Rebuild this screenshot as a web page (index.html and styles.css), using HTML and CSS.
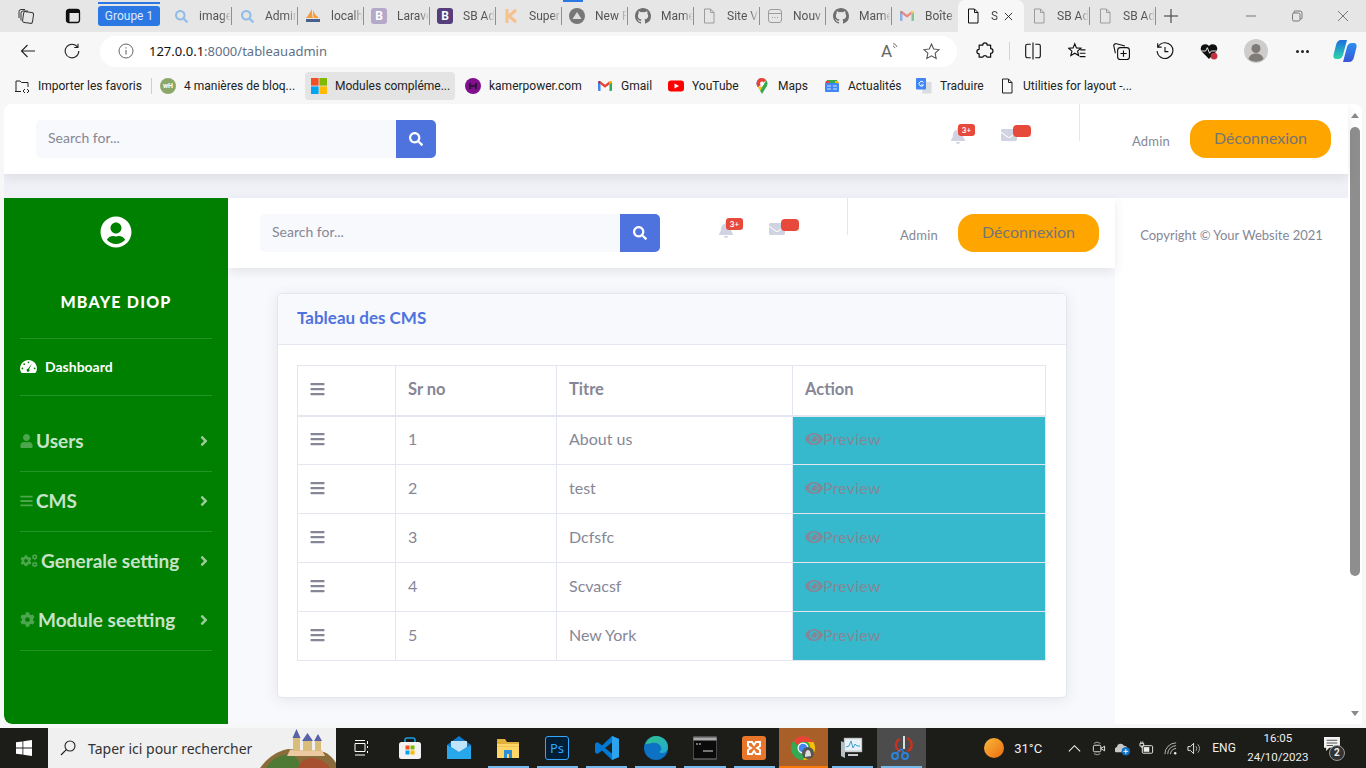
FILE: index.html
```html
<!DOCTYPE html>
<html lang="fr">
<head>
  <meta charset="UTF-8">
  <title>Tableau des CMS</title>
  <link rel="stylesheet" href="styles.css">
</head>
<body>

  <svg class="sprite" xmlns="http://www.w3.org/2000/svg">
    <symbol id="i-search" viewBox="0 0 512 512"><path fill="currentColor" d="M505 442.7L405.3 343c-4.5-4.5-10.6-7-17-7H372c27.6-35.3 44-79.7 44-128C416 93.1 322.9 0 208 0S0 93.1 0 208s93.1 208 208 208c48.3 0 92.7-16.4 128-44v16.3c0 6.4 2.5 12.5 7 17l99.7 99.7c9.4 9.4 24.6 9.4 33.9 0l28.3-28.3c9.4-9.4 9.4-24.6.1-34zM208 336c-70.7 0-128-57.2-128-128 0-70.7 57.2-128 128-128 70.7 0 128 57.2 128 128 0 70.7-57.2 128-128 128z"/></symbol>
    <symbol id="i-bell" viewBox="0 0 448 512"><path fill="currentColor" d="M224 512c35.32 0 63.97-28.65 63.97-64H160.03c0 35.35 28.65 64 63.97 64zm215.39-149.71c-19.32-20.76-55.47-51.99-55.47-154.29 0-77.7-54.48-139.9-127.94-155.16V32c0-17.67-14.32-32-31.98-32s-31.98 14.33-31.98 32v20.84C118.56 68.1 64.08 130.3 64.08 208c0 102.3-36.15 133.53-55.47 154.29-6 6.45-8.66 14.16-8.61 21.71.11 16.4 12.98 32 32.1 32h383.8c19.12 0 32-15.6 32.1-32 .05-7.55-2.61-15.27-8.61-21.71z"/></symbol>
    <symbol id="i-mail" viewBox="0 0 512 512"><path fill="currentColor" d="M502.3 190.8c3.9-3.1 9.7-.2 9.7 4.7V400c0 26.5-21.5 48-48 48H48c-26.5 0-48-21.5-48-48V195.6c0-5 5.7-7.8 9.7-4.7 22.4 17.4 52.1 39.5 154.1 113.6 21.1 15.4 56.7 47.8 92.2 47.6 35.7.3 72-32.8 92.3-47.6 102-74.1 131.6-96.3 154-113.7zM256 320c23.2.4 56.6-29.2 73.4-41.4 132.7-96.3 142.8-104.7 173.4-128.7 5.8-4.5 9.2-11.5 9.2-18.9v-19c0-26.5-21.5-48-48-48H48C21.5 64 0 85.5 0 112v19c0 7.4 3.4 14.3 9.2 18.9 30.6 23.9 40.7 32.4 173.4 128.7 16.8 12.2 50.2 41.8 73.4 41.4z"/></symbol>
    <symbol id="i-bars" viewBox="0 0 448 512"><path fill="currentColor" d="M16 132h416c8.837 0 16-7.163 16-16V76c0-8.837-7.163-16-16-16H16C7.163 60 0 67.163 0 76v40c0 8.837 7.163 16 16 16zm0 160h416c8.837 0 16-7.163 16-16v-40c0-8.837-7.163-16-16-16H16c-8.837 0-16 7.163-16 16v40c0 8.837 7.163 16 16 16zm0 160h416c8.837 0 16-7.163 16-16v-40c0-8.837-7.163-16-16-16H16c-8.837 0-16 7.163-16 16v40c0 8.837 7.163 16 16 16z"/></symbol>
    <symbol id="i-user" viewBox="0 0 448 512"><path fill="currentColor" d="M224 256c70.7 0 128-57.3 128-128S294.7 0 224 0 96 57.3 96 128s57.3 128 128 128zm89.6 32h-16.7c-22.2 10.2-46.9 16-72.9 16s-50.6-5.8-72.9-16h-16.7C60.2 288 0 348.2 0 422.4V464c0 26.5 21.5 48 48 48h352c26.5 0 48-21.5 48-48v-41.6c0-74.2-60.2-134.4-134.4-134.4z"/></symbol>
    <symbol id="i-eye" viewBox="0 0 576 512"><path fill="currentColor" d="M572.52 241.4C518.29 135.59 410.93 64 288 64S57.68 135.64 3.48 241.41a32.35 32.35 0 0 0 0 29.19C57.71 376.41 165.07 448 288 448s230.32-71.64 284.52-177.41a32.35 32.35 0 0 0 0-29.19zM288 400a144 144 0 1 1 144-144 143.93 143.93 0 0 1-144 144zm0-240a95.31 95.31 0 0 0-25.31 3.79 47.85 47.85 0 0 1-66.9 66.9A95.78 95.78 0 1 0 288 160z"/></symbol>
    <symbol id="i-usercircle" viewBox="0 0 496 512"><path fill="currentColor" d="M248 8C111 8 0 119 0 256s111 248 248 248 248-111 248-248S385 8 248 8zm0 96c48.6 0 88 39.4 88 88s-39.4 88-88 88-88-39.4-88-88 39.4-88 88-88zm0 344c-58.7 0-111.3-26.6-146.5-68.2 18.8-35.4 55.6-59.8 98.5-59.8 2.4 0 4.8.4 7.1 1.1 13 4.2 26.6 6.9 40.9 6.9 14.3 0 28-2.7 40.9-6.9 2.3-.7 4.7-1.1 7.1-1.1 42.9 0 79.7 24.4 98.5 59.8C359.3 421.4 306.7 448 248 448z"/></symbol>
    <symbol id="i-angle" viewBox="0 0 256 512"><path fill="currentColor" d="M224.3 273l-136 136c-9.4 9.4-24.6 9.4-33.9 0l-22.6-22.6c-9.4-9.4-9.4-24.6 0-33.9l96.4-96.4-96.4-96.4c-9.4-9.4-9.4-24.6 0-33.9L54.3 103c9.4-9.4 24.6-9.4 33.9 0l136 136c9.5 9.4 9.5 24.6.1 34z"/></symbol>
    <symbol id="i-cog" viewBox="0 0 512 512"><path fill="currentColor" d="M487.4 315.7l-42.6-24.6c4.3-23.2 4.3-47 0-70.2l42.6-24.6c4.9-2.8 7.1-8.6 5.5-14-11.1-35.6-30-67.8-54.7-94.6-3.8-4.1-10-5.1-14.8-2.3L380.8 110c-17.9-15.4-38.5-27.3-60.8-35.1V25.8c0-5.6-3.9-10.5-9.4-11.7-36.7-8.2-74.3-7.8-109.2 0-5.5 1.2-9.4 6.1-9.4 11.7V75c-22.2 7.9-42.8 19.8-60.8 35.1L88.7 85.5c-4.9-2.8-11-1.9-14.8 2.3-24.7 26.7-43.6 58.9-54.7 94.6-1.7 5.4.6 11.2 5.5 14L67.3 221c-4.3 23.2-4.3 47 0 70.2l-42.6 24.6c-4.9 2.8-7.1 8.6-5.5 14 11.1 35.6 30 67.8 54.7 94.6 3.8 4.1 10 5.1 14.8 2.3l42.6-24.6c17.9 15.4 38.5 27.3 60.8 35.1v49.2c0 5.6 3.9 10.5 9.4 11.7 36.7 8.2 74.3 7.8 109.2 0 5.5-1.2 9.4-6.1 9.4-11.7v-49.2c22.2-7.9 42.8-19.8 60.8-35.1l42.6 24.6c4.9 2.8 11 1.9 14.8-2.3 24.7-26.7 43.6-58.9 54.7-94.6 1.5-5.5-.7-11.3-5.6-14.1zM256 336c-44.1 0-80-35.9-80-80s35.9-80 80-80 80 35.9 80 80-35.9 80-80 80z"/></symbol>
    <symbol id="i-doc" viewBox="0 0 16 16"><path fill="none" stroke="currentColor" stroke-width="1" stroke-linejoin="round" d="M3.5 1h6l3.5 3.5V15h-9.5zM9.5 1v3.5H13"/></symbol>
    <symbol id="i-github" viewBox="0 0 16 16"><path fill="currentColor" fill-rule="evenodd" d="M8 0C3.58 0 0 3.58 0 8c0 3.54 2.29 6.53 5.47 7.59.4.07.55-.17.55-.38v-1.34c-2.23.49-2.69-1.07-2.69-1.07-.36-.92-.89-1.17-.89-1.17-.73-.5.05-.49.05-.49.8.06 1.23.83 1.23.83.72 1.22 1.87.87 2.33.66.07-.52.28-.87.51-1.07-1.78-.2-3.64-.89-3.64-3.95 0-.87.31-1.59.82-2.15-.08-.2-.36-1.02.08-2.12 0 0 .67-.21 2.2.82a7.6 7.6 0 0 1 4 0c1.53-1.04 2.2-.82 2.2-.82.44 1.1.16 1.92.08 2.12.51.56.82 1.27.82 2.15 0 3.07-1.87 3.75-3.65 3.95.29.25.54.73.54 1.48v2.2c0 .21.15.46.55.38A8 8 0 0 0 16 8c0-4.42-3.58-8-8-8z"/></symbol>
    <symbol id="i-gmail" viewBox="0 0 16 16"><path fill="#4285f4" d="M1 3.5h2.5V13H2a1 1 0 0 1-1-1z"/><path fill="#34a853" d="M12.5 3.5H15V12a1 1 0 0 1-1 1h-1.5z"/><path fill="#ea4335" d="M3.5 3.2L8 6.8l4.5-3.6v3.1L8 9.8 3.5 6.3z"/><path fill="#c5221f" d="M1 4.5C1 3 2.6 2.5 3.5 3.2v3.1L1 4.5z"/><path fill="#fbbc04" d="M15 4.5C15 3 13.4 2.5 12.5 3.2v3.1L15 4.5z"/></symbol>
    <symbol id="i-win" viewBox="0 0 16 16"><path fill="currentColor" d="M0 2.3l6.5-.9v6.2H0zM7.3 1.300L16 0v7.600H7.300zM0 8.400h6.500v6.200L0 13.700zM7.300 8.400H16V16l-8.700-1.300z"/></symbol>
    <symbol id="i-ms" viewBox="0 0 16 16"><path fill="#f25022" d="M0 0h7.600v7.600H0z"/><path fill="#7fba00" d="M8.400 0H16v7.600H8.400z"/><path fill="#00a4ef" d="M0 8.400h7.600V16H0z"/><path fill="#ffb900" d="M8.400 8.400H16V16H8.400z"/></symbol>
  </svg>

  <div class="browser">

    <div class="tabbar">
      <span class="tb-btn">
        <svg class="ico16" viewBox="0 0 16 16"><g fill="none" stroke="#333" stroke-width="1"><rect x="5" y="4" width="10" height="11" rx="2" transform="rotate(8 10 10)"/><path d="M3 12.5V5a2 2 0 0 1 2-2h5M1 10V3.5A2 2 0 0 1 3 1.5h4"/></g></svg>
      </span>
      <span class="tb-btn">
        <svg class="ico16" viewBox="0 0 16 16"><rect x="1.5" y="1.5" width="13" height="13" rx="2.5" fill="none" stroke="#111" stroke-width="1.3"/><path d="M1.5 2h13v3h-13zM1.5 5h3v9h-3z" fill="#111"/></svg>
      </span>
      <span class="tab-group">Groupe 1</span>
      <span class="tab-line"></span>
      <span class="tab-line second"></span>

      <div class="tab"><svg class="fav fav-blue"><use href="#i-search"/></svg><span class="tab-label">images</span></div>
      <div class="tab"><svg class="fav fav-blue"><use href="#i-search"/></svg><span class="tab-label">Admin</span></div>
      <div class="tab"><svg class="fav" viewBox="0 0 16 16"><path fill="#f39c3a" d="M1 10C3 8 5 4 7 1c0 4 0 7 1 9zM8 2c1 3 3 6 6 8H9C8 8 8 5 8 2z"/><path fill="#4a5f8a" d="M1 11h14v3H1z"/></svg><span class="tab-label">localhost</span></div>
      <div class="tab"><span class="fav fav-b fav-b-pale">B</span><span class="tab-label">Laravel</span></div>
      <div class="tab"><span class="fav fav-b">B</span><span class="tab-label">SB Admin</span></div>
      <div class="tab"><svg class="fav" viewBox="0 0 16 16"><path fill="none" stroke="#f6c08f" stroke-width="3" d="M4 1v14M13 2L6 8l7 6"/></svg><span class="tab-label">Super</span></div>
      <div class="tab"><svg class="fav" viewBox="0 0 16 16"><circle cx="8" cy="8" r="8" fill="#777"/><path d="M8 4l4.5 7h-9z" fill="#ddd"/></svg><span class="tab-label">New Pr</span></div>
      <div class="tab"><svg class="fav fav-gray"><use href="#i-github"/></svg><span class="tab-label">Mamer</span></div>
      <div class="tab"><svg class="fav fav-pale"><use href="#i-doc"/></svg><span class="tab-label">Site V</span></div>
      <div class="tab"><svg class="fav fav-pale" viewBox="0 0 16 16"><rect x="1.5" y="1.5" width="13" height="13" rx="2.5" fill="none" stroke="currentColor"/><path d="M1.5 5.5h13" stroke="currentColor"/><path d="M5 9.5h1M7.5 9.5h1M10 9.5h1" stroke="currentColor"/></svg><span class="tab-label">Nouv</span></div>
      <div class="tab"><svg class="fav fav-gray"><use href="#i-github"/></svg><span class="tab-label">Mamer</span></div>
      <div class="tab no-sep"><svg class="fav fav-faded"><use href="#i-gmail"/></svg><span class="tab-label">Boîte</span></div>
      <div class="tab active no-sep"><svg class="fav fav-dark"><use href="#i-doc"/></svg><span class="tab-label short">S</span>
        <svg class="tab-close" viewBox="0 0 10 10"><path d="M1 1l8 8M9 1l-8 8" stroke="#222" stroke-width="1"/></svg>
      </div>
      <div class="tab"><svg class="fav fav-pale"><use href="#i-doc"/></svg><span class="tab-label">SB Admin</span></div>
      <div class="tab"><svg class="fav fav-pale"><use href="#i-doc"/></svg><span class="tab-label">SB Admin</span></div>
      <svg class="tab-plus" viewBox="0 0 14 14"><path d="M7 0v14M0 7h14" stroke="#333" stroke-width="1"/></svg>

      <div class="win-ctrl">
        <svg viewBox="0 0 12 12"><path d="M1 6h10" stroke="#777"/></svg>
        <svg viewBox="0 0 12 12"><path d="M3 3V2a1 1 0 0 1 1-1h5a2 2 0 0 1 2 2v5a1 1 0 0 1-1 1H9" fill="none" stroke="#777"/><rect x="1.5" y="3" width="7.5" height="8" rx="1.5" fill="none" stroke="#777"/></svg>
        <svg viewBox="0 0 12 12"><path d="M1 1l10 10M11 1L1 11" stroke="#777"/></svg>
      </div>
    </div>

    <div class="addressbar">
      <svg class="nav-ico" viewBox="0 0 16 16"><path d="M15 8H1.5M7.5 2L1.5 8l6 6" fill="none" stroke="#222" stroke-width="1.1"/></svg>
      <svg class="nav-ico" viewBox="0 0 16 16"><path d="M13.5 4A6.8 6.8 0 1 0 14.8 8M14 .8V4.5h-3.7" fill="none" stroke="#222" stroke-width="1.1"/></svg>
      <div class="urlbox">
        <svg class="info" viewBox="0 0 16 16"><circle cx="8" cy="8" r="7" fill="none" stroke="#666"/><path d="M8 7v4.5M8 4.3v1.300" stroke="#666" stroke-width="1.1"/></svg>
        <span class="url"><b>127.0.0.1</b>:8000/tableauadmin</span>
        <span class="readaloud">A<svg viewBox="0 0 8 8"><path d="M1 1.5a5 5 0 0 1 4 3.5M1 4a3 3 0 0 1 2 2" fill="none" stroke="#555" stroke-width=".8"/></svg></span>
        <svg class="urlstar" viewBox="0 0 16 16"><path d="M8 1l2.1 4.6 5 .6-3.7 3.4 1 5L8 12.1 3.6 14.6l1-5L.9 6.2l5-.6z" fill="none" stroke="#555"/></svg>
      </div>
      <div class="toolset">
        <svg class="tool tool-ext" viewBox="0 0 16 16"><path d="M6 2.8a2 2 0 0 1 4 0h3v3a2.1 2.1 0 0 1 0 4.2v3.5H9.8a1.9 1.9 0 0 0-3.700 0H2.800v-3a2 2 0 0 1 0-4V2.800z" fill="none" stroke="#111" stroke-width="1.1" stroke-linejoin="round"/></svg>
        <span class="tool-sep"></span>
        <svg class="tool" viewBox="0 0 16 16"><path d="M6 2H3a1.5 1.5 0 0 0-1.5 1.5v9A1.5 1.5 0 0 0 3 14h3M10 2h3a1.5 1.5 0 0 1 1.5 1.5v9A1.5 1.5 0 0 1 13 14h-3M8 .5v15" fill="none" stroke="#111"/></svg>
        <svg class="tool" viewBox="0 0 16 16"><path d="M6 1.5l1.5 3.7 4 .3-3 2.6 1 3.9L6 10l-3.5 2 1-3.9-3-2.6 4-.3zM11 7h4.5M10.5 10H15.5M10.5 13H15.5" fill="none" stroke="#111"/></svg>
        <svg class="tool" viewBox="0 0 16 16"><rect x="5" y="5" width="10.5" height="10.5" rx="2.5" fill="none" stroke="#111"/><path d="M10.2 7.5v5.5M7.5 10.2h5.5M11.5 3.5l-7.5-2A2 2 0 0 0 1.5 3L3 10" fill="none" stroke="#111"/></svg>
        <svg class="tool" viewBox="0 0 16 16"><path d="M2 4a7 7 0 1 1-1 4M1.5 1v3.5H5M8 4.5V8.5H11" fill="none" stroke="#111"/></svg>
        <svg class="tool" viewBox="0 0 16 16"><path d="M8 15L1.5 8.5A4 4 0 0 1 8 3.500a4 4 0 0 1 6.500 5z" fill="#111"/><path d="M1 8h4l1.5-3 2 5 1.5-2h5" fill="none" stroke="#fff" stroke-width=".8"/><circle cx="12.5" cy="12.5" r="3" fill="#c4313d"/></svg>
        <span class="avatar"><svg viewBox="0 0 24 24"><circle cx="12" cy="12" r="12" fill="#cfcdcb"/><circle cx="12" cy="9.5" r="4.5" fill="#7e7b79"/><path d="M4.5 20c1-4 4-5.5 7.5-5.5s6.5 1.5 7.5 5.5c-4 3.5-11 3.5-15 0z" fill="#7e7b79"/></svg></span>
        <span class="dots"><i></i><i></i><i></i></span>
        <svg class="copilot" viewBox="0 0 24 24"><defs><linearGradient id="cp1" x1="0" y1="0" x2="0" y2="1"><stop offset="0" stop-color="#1b6fe0"/><stop offset="1" stop-color="#2fd6a8"/></linearGradient><linearGradient id="cp2" x1="0" y1="0" x2="0" y2="1"><stop offset="0" stop-color="#2a90ef"/><stop offset="1" stop-color="#3a55d8"/></linearGradient></defs><path d="M8 1h6l-4 15c-.5 2-2 4-5 4H3c-2 0-3-2-2.5-4L3 6c.5-3 2.5-5 5-5z" fill="url(#cp1)"/><path d="M16 23h-6l4-15c.5-2 2-4 5-4h2c2 0 3 2 2.5 4L21 18c-.5 3-2.5 5-5 5z" fill="url(#cp2)"/></svg>
      </div>
    </div>

    <div class="bookmarks">
      <span class="bm bm-import"><svg class="bm-ico" viewBox="0 0 16 16"><path d="M2 13V3h4l1.5 1.5H14V9M1 13.5h6M11 11l-2 2 2 2M13 11l2 2-2 2" fill="none" stroke="#222"/></svg>Importer les favoris</span>
      <span class="bm-sep"></span>
      <span class="bm bm-wh"><span class="wh-ico">wH</span>4 manières de bloq...</span>
      <span class="bm bm-on"><svg class="bm-ico"><use href="#i-ms"/></svg>Modules compléme...</span>
      <span class="bm bm-kamer"><svg class="bm-ico" viewBox="0 0 16 16"><circle cx="8" cy="8" r="8" fill="#7f0f8d"/><path d="M5 5v6M11 5v6M5 8h6" stroke="#35103b" stroke-width="2"/></svg>kamerpower.com</span>
      <span class="bm bm-gmail"><svg class="bm-ico"><use href="#i-gmail"/></svg>Gmail</span>
      <span class="bm bm-yt"><svg class="bm-ico" viewBox="0 0 16 16"><rect y="2.5" width="16" height="11" rx="3" fill="#f00"/><path d="M6.5 5.5L11 8l-4.5 2.5z" fill="#fff"/></svg>YouTube</span>
      <span class="bm bm-maps"><svg class="bm-ico" viewBox="0 0 16 16"><path d="M8 0a5.5 5.5 0 0 0-4 9.2z" fill="#4285f4"/><path d="M8 0a5.5 5.5 0 0 1 4.3 2.3L4 9.2A5.5 5.5 0 0 1 8 0z" fill="#ea4335"/><path d="M12.3 2.3a5.5 5.5 0 0 1 .4 6L8 16 6 12.5z" fill="#34a853"/><path d="M4 9.2L8 16l-2-3.5 3-4z" fill="#fbbc04"/><circle cx="8" cy="5.5" r="2" fill="#fff"/></svg>Maps</span>
      <span class="bm bm-news"><svg class="bm-ico" viewBox="0 0 16 16"><path d="M3 2h10l1 3H2z" fill="#34a853"/><path d="M2 3l3 0v2H1z" fill="#ea4335"/><path d="M11 3h3l1 2h-4z" fill="#fbbc04"/><rect x="1" y="5" width="14" height="9" rx="1" fill="#4285f4"/><path d="M3 8h4M3 11h4M9 8h4M9 11h4" stroke="#d2e3fc"/></svg>Actualités</span>
      <span class="bm bm-trad"><svg class="bm-ico" viewBox="0 0 16 16"><path d="M8 4h7.5v11.5H6z" fill="#dadce0"/><rect width="10" height="11.5" rx="1" fill="#4285f4"/><path d="M7.5 4.5A2.4 2.4 0 1 0 7.5 7H5" fill="none" stroke="#fff" stroke-width="1"/></svg>Traduire</span>
      <span class="bm bm-util"><svg class="bm-ico"><use href="#i-doc"/></svg>Utilities for layout -...</span>
    </div>

    <div class="viewport">
      <div class="page">

        <nav class="topbar">
          <form class="searchbox"><span class="searchinput">Search for...</span><span class="searchbtn"><svg><use href="#i-search"/></svg></span></form>
          <div class="top-right">
            <span class="alert-ico"><svg class="bell"><use href="#i-bell"/></svg><span class="badge">3+</span></span>
            <span class="alert-ico"><svg class="mail"><use href="#i-mail"/></svg><span class="badge empty"></span></span>
            <span class="top-divider"></span>
            <span class="admin-name">Admin</span>
            <button class="logout" type="button">Déconnexion</button>
          </div>
        </nav>

        <div class="band"></div>

        <div class="page-row">
          <aside class="sidebar">
            <svg class="side-avatar"><use href="#i-usercircle"/></svg>
            <div class="side-name">MBAYE DIOP</div>
            <hr class="side-line">
            <a class="side-dash">
              <svg viewBox="0 0 576 512"><path fill="#fff" d="M288 32C129 32 0 161 0 320c0 53 14 102 39 144 6 10 16 16 28 16h442c12 0 22-6 28-16 25-42 39-91 39-144C576 161 447 32 288 32z"/><g fill="#008000"><circle cx="288" cy="112" r="30"/><circle cx="140" cy="176" r="30"/><circle cx="80" cy="320" r="30"/><circle cx="496" cy="320" r="30"/><path d="M400 160l-90 190a50 50 0 1 1-40-14z"/></g></svg>
              Dashboard
            </a>
            <hr class="side-line">
            <a class="side-item first"><svg class="si-ico si-user"><use href="#i-user"/></svg><span>Users</span><svg class="si-arrow"><use href="#i-angle"/></svg></a>
            <hr class="side-line">
            <a class="side-item"><svg class="si-ico si-user"><use href="#i-bars"/></svg><span>CMS</span><svg class="si-arrow"><use href="#i-angle"/></svg></a>
            <hr class="side-line">
            <a class="side-item">
              <svg class="si-ico si-cogs" viewBox="0 0 640 512"><use href="#i-cog" x="0" y="40" width="420" height="420"/><use href="#i-cog" x="420" y="0" width="220" height="220"/><use href="#i-cog" x="420" y="270" width="220" height="220"/></svg>
              <span>Generale setting</span><svg class="si-arrow"><use href="#i-angle"/></svg>
            </a>
            <a class="side-item"><svg class="si-ico si-cog"><use href="#i-cog"/></svg><span>Module seetting</span><svg class="si-arrow"><use href="#i-angle"/></svg></a>
            <hr class="side-line">
          </aside>

          <main class="main">
            <nav class="topbar inner">
              <form class="searchbox"><span class="searchinput">Search for...</span><span class="searchbtn"><svg><use href="#i-search"/></svg></span></form>
              <div class="top-right">
                <span class="alert-ico"><svg class="bell"><use href="#i-bell"/></svg><span class="badge">3+</span></span>
                <span class="alert-ico"><svg class="mail"><use href="#i-mail"/></svg><span class="badge empty"></span></span>
                <span class="top-divider"></span>
                <span class="admin-name">Admin</span>
                <button class="logout" type="button">Déconnexion</button>
              </div>
            </nav>

            <div class="card">
              <div class="card-header">Tableau des CMS</div>
              <div class="card-body">
                <table class="cms-table">
                  <thead>
                    <tr>
                      <th><svg class="row-bars"><use href="#i-bars"/></svg></th>
                      <th>Sr no</th>
                      <th>Titre</th>
                      <th>Action</th>
                    </tr>
                  </thead>
                  <tbody>
                    <tr>
                      <td><svg class="row-bars"><use href="#i-bars"/></svg></td><td>1</td><td>About us</td>
                      <td class="td-action"><span class="preview"><svg><use href="#i-eye"/></svg>Preview</span></td>
                    </tr>
                    <tr>
                      <td><svg class="row-bars"><use href="#i-bars"/></svg></td><td>2</td><td>test</td>
                      <td class="td-action"><span class="preview"><svg><use href="#i-eye"/></svg>Preview</span></td>
                    </tr>
                    <tr>
                      <td><svg class="row-bars"><use href="#i-bars"/></svg></td><td>3</td><td>Dcfsfc</td>
                      <td class="td-action"><span class="preview"><svg><use href="#i-eye"/></svg>Preview</span></td>
                    </tr>
                    <tr>
                      <td><svg class="row-bars"><use href="#i-bars"/></svg></td><td>4</td><td>Scvacsf</td>
                      <td class="td-action"><span class="preview"><svg><use href="#i-eye"/></svg>Preview</span></td>
                    </tr>
                    <tr>
                      <td><svg class="row-bars"><use href="#i-bars"/></svg></td><td>5</td><td>New York</td>
                      <td class="td-action"><span class="preview"><svg><use href="#i-eye"/></svg>Preview</span></td>
                    </tr>
                  </tbody>
                </table>
              </div>
            </div>
          </main>

          <aside class="side-foot">Copyright © Your Website 2021</aside>
        </div>
      </div>

      <div class="scrollbar">
        <span class="sb-up"></span>
        <span class="sb-thumb"></span>
        <span class="sb-down"></span>
      </div>
    </div>

    <footer class="taskbar">
      <span class="start"><svg><use href="#i-win"/></svg></span>
      <div class="task-search">
        <svg viewBox="0 0 16 16"><circle cx="10" cy="6" r="5" fill="none" stroke="#222" stroke-width="1.1"/><path d="M6.3 9.7L1 15" stroke="#222" stroke-width="1.2"/></svg>
        <span>Taper ici pour rechercher</span>
        <svg class="castle" viewBox="0 0 76 40"><path d="M0 40C6 32 14 24 28 21l36 3c5 2 9 6 12 11v5z" fill="#8a6b3a"/><path d="M6 40c6-9 14-14 24-13 8 1 10 7 10 13z" fill="#4f7a36"/><path d="M38 40c2-7 10-12 20-9 6 2 10 5 12 9z" fill="#a6502f"/><path d="M30 22h32l3 6H27z" fill="#ecc9a0"/><path d="M33 9h7v14h-7zM43 12h9v11h-9zM55 12h6v11h-6z" fill="#d9bd7a"/><path d="M36.5 1l4 9h-8zM47.5 5l5.5 8H42zM58 6l4 7h-8z" fill="#5a62a8"/></svg>
      </div>
      <span class="task-ico"><svg class="taskview" viewBox="0 0 16 16"><path d="M2 .5h10M2 3.500h10v8H2zM2 15h10M14.500 1v3M14.500 6v2M14.500 11v2" fill="none" stroke="#fff"/></svg></span>
      <span class="task-ico"><svg viewBox="0 0 24 24"><path d="M7 6V3.500A2 2 0 0 1 9 2h6a2 2 0 0 1 2 1.500V6" fill="none" stroke="#19a0e0" stroke-width="1.6"/><rect x="1" y="6" width="22" height="17" rx="2.5" fill="#f3f3f3"/><path d="M7.500 9.500h4v4h-4z" fill="#f25022"/><path d="M12.500 9.500h4v4h-4z" fill="#7fba00"/><path d="M7.500 14.500h4v4h-4z" fill="#00a4ef"/><path d="M12.500 14.500h4v4h-4z" fill="#ffb900"/></svg></span>
      <span class="task-ico"><svg viewBox="0 0 24 24"><path d="M0 9l12-9 12 9v14H0z" fill="#0f78c8"/><path d="M0 9l12 7 12-7v14H0z" fill="#28a8ea"/><path d="M4 5h16v6l-8 5-8-5z" fill="#bfe4fb"/></svg></span>
      <span class="task-ico open"><svg viewBox="0 0 24 24"><path d="M1 3h8l2 3h12v16H1z" fill="#e2b13c"/><path d="M1 8h22v14H1z" fill="#ffd768"/><path d="M8 14h8v8h-3v-4h-2v4H8z" fill="#2d8fd6"/><rect x="1" y="10" width="22" height="1" fill="#f0c352"/></svg></span>
      <span class="task-ico open"><svg viewBox="0 0 24 24"><rect x=".5" y=".5" width="23" height="23" rx="2.5" fill="#001e36" stroke="#31a8ff"/><text x="12" y="17" text-anchor="middle" class="ps-letters">Ps</text></svg></span>
      <span class="task-ico open"><svg viewBox="0 0 24 24"><path d="M17 0l7 3v18l-7 3-10-9.5L2.5 18 0 16.5V7.5L2.5 6 7 9.500z" fill="#0078d4"/><path d="M17 6.500L10 12l7 5.500z" fill="#1f1f1b"/><path d="M17 0l7 3v18l-7 3z" fill="#2da3ec"/></svg></span>
      <span class="task-ico open"><svg viewBox="0 0 24 24"><defs><linearGradient id="ed1" x1="0" y1="0" x2="1" y2="1"><stop offset="0" stop-color="#33c481"/><stop offset="1" stop-color="#1fa9d8"/></linearGradient></defs><circle cx="12" cy="12" r="12" fill="#0d72c4"/><path d="M1 9C3 3 8 0 12 0c7 0 12 5 12 11 0 4-3 6-6 6-2 0-3-1-3-1 2-1 3-3 2-5-1-3-5-5-9-4-3 .5-6 1-7 2z" fill="url(#ed1)"/></svg></span>
      <span class="task-ico open"><svg viewBox="0 0 24 24"><rect y="1" width="24" height="22" rx="1" fill="#0b0b0b" stroke="#888"/><rect x=".5" y="1.5" width="23" height="3" fill="#aaa"/><path d="M3 8h2M6 8h2M10 15h10" stroke="#ddd"/></svg></span>
      <span class="task-ico open"><svg viewBox="0 0 24 24"><rect width="24" height="24" rx="3" fill="#e8752a"/><path d="M6 6h4l2 3 2-3h4v4l-3 2 3 2v4h-4l-2-3-2 3H6v-4l3-2-3-2z" fill="none" stroke="#fff" stroke-width="2"/></svg></span>
      <span class="task-ico open on-orange"><svg viewBox="0 0 24 24"><circle cx="12" cy="12" r="12" fill="#34a853"/><path d="M12 0a12 12 0 0 1 10.4 6H12a6 6 0 0 0-5.6 3.8L2.6 4.4A12 12 0 0 1 12 0z" fill="#ea4335"/><path d="M22.4 6A12 12 0 0 1 12 24l5-8.5a6 6 0 0 0-.5-9.5z" fill="#fbbc04"/><circle cx="12" cy="12" r="5.5" fill="#fff"/><circle cx="12" cy="12" r="4.3" fill="#4285f4"/><circle cx="17" cy="17" r="6" fill="#555"/><path d="M14 21c0-4 1-7 3-7s3 3 3 6z" fill="#ddd"/></svg></span>
      <span class="task-ico open"><svg viewBox="0 0 24 24"><path d="M4 2h18v14H4z" fill="#d6dde0" stroke="#999" stroke-width=".5"/><path d="M5 3.5h16V14H5z" fill="#eaf2f7"/><path d="M6 11l3-1 2-5 2 7 2-4 2 2h3" fill="none" stroke="#3b9fd1"/><path d="M1 5v15l4 2V7z" fill="#b8bfc2"/><path d="M8 18h10v2H8z" fill="#c9cfd2"/></svg></span>
      <span class="task-ico open on-gray"><svg viewBox="0 0 24 24"><path d="M14 0v13" stroke="#ddd" stroke-width="2"/><path d="M10 3C4 6 5 14 11 15M17 2c6 3 6 10 1 13" fill="none" stroke="#c8321e" stroke-width="2.5"/><circle cx="5" cy="20" r="3" fill="none" stroke="#2c82d6" stroke-width="2"/><circle cx="15" cy="20" r="3" fill="none" stroke="#2c82d6" stroke-width="2"/><path d="M6 18l5-5M14 18l-2-5" stroke="#2c82d6" stroke-width="1.5"/></svg></span>

      <div class="tray">
        <span class="sun"></span>
        <span class="temp">31°C</span>
        <svg class="tr-ico caret" viewBox="0 0 16 16"><path d="M2 11l6-6 6 6" fill="none" stroke="#eee" stroke-width="1.2"/></svg>
        <svg class="tr-ico meet" viewBox="0 0 16 16"><rect x="2.5" y="4.5" width="8" height="7" rx="1.5" fill="none" stroke="#eee"/><path d="M10.5 8l4-2.5v5z" fill="none" stroke="#eee"/><path d="M3 2.5a6 6 0 0 1 7 0M3 13.5a6 6 0 0 0 7 0" fill="none" stroke="#aaa"/></svg>
        <svg class="tr-ico cloud" viewBox="0 0 16 16"><path d="M1 12a3 3 0 0 1 1-5.5A4 4 0 0 1 9.5 5 3 3 0 0 1 13 8v4z" fill="#c8c8c8"/><circle cx="11.5" cy="11" r="4.5" fill="#1273c4"/><path d="M9 11h5M11.5 8.5v5" stroke="#fff"/></svg>
        <svg class="tr-ico batt" viewBox="0 0 16 16"><rect x="3.5" y="5" width="11" height="8" rx="1" fill="none" stroke="#eee"/><rect x="5" y="6.5" width="6" height="5" fill="#eee"/><path d="M1 2.5h4v3H1zM2 .5v2M4 .5v2M3 5.5v2" fill="none" stroke="#eee"/></svg>
        <svg class="tr-ico wifi" viewBox="0 0 16 16"><path d="M2 14A12 12 0 0 1 14 2M5 14a9 9 0 0 1 9-9M8 14a6 6 0 0 1 6-6" fill="none" stroke="#bbb" stroke-width="1"/><circle cx="13" cy="13" r="1.3" fill="#eee"/></svg>
        <svg class="tr-ico vol" viewBox="0 0 16 16"><path d="M1 6h2.5L7 2.5v11L3.5 10H1z" fill="none" stroke="#eee"/><path d="M9.5 5.5a4 4 0 0 1 0 5M11.5 3.5a7 7 0 0 1 0 9" fill="none" stroke="#aaa"/></svg>
        <span class="lang">ENG</span>
        <span class="clock"><span>16:05</span><span>24/10/2023</span></span>
        <span class="notif"><svg viewBox="0 0 16 16"><path d="M0 1h15v10H5l-3 3v-3H0z" fill="#f2f2f2"/><path d="M2.5 4h10M2.5 6.5h10M2.5 9h6" stroke="#555"/></svg><span class="notif-num">2</span></span>
      </div>
    </footer>
  </div>

</body>
</html>
```

FILE: styles.css
```css
* {
  box-sizing: border-box;
}

html, body {
  margin: 0;
  padding: 0;
  height: 100%;
  overflow: hidden;
}

body {
  font-family: Roboto, Arial, sans-serif;
  color: #333;
  background: #f7f7f7;
}

.sprite {
  display: none;
}

.browser {
  display: flex;
  flex-direction: column;
  width: 1366px;
  height: 768px;
}

/* tab strip */
.tabbar {
  position: relative;
  display: flex;
  align-items: center;
  height: 32px;
  background: #e6e6e6;
  font-size: 12px;
  color: #555;
}

.tb-btn {
  display: flex;
  justify-content: center;
  width: 42px;
  margin-left: 5px;
}

.ico16 {
  width: 16px;
  height: 16px;
}

.tab-group {
  display: flex;
  align-items: center;
  justify-content: center;
  width: 62px;
  height: 20px;
  margin-left: 4px;
  margin-right: 6px;
  border-radius: 3px;
  background: #2b78e4;
  color: #dfe9fb;
  font-size: 12px;
}

.tab-line {
  position: absolute;
  top: 2px;
  left: 98px;
  width: 62px;
  height: 2px;
  background: #2b78e4;
}

.tab-line.second {
  top: 0;
  left: 563px;
  width: 20px;
}

.tab {
  display: flex;
  align-items: center;
  flex: 0 0 66px;
  height: 32px;
  padding-left: 7px;
  gap: 10px;
  position: relative;
}

.tab::after {
  content: "";
  position: absolute;
  right: 0;
  top: 7px;
  width: 1px;
  height: 18px;
  background: #8f8f8f;
}

.tab.no-sep::after {
  display: none;
}

.tab.active {
  background: #f7f7f7;
  border-radius: 7px 7px 0 0;
  color: #444;
}

.fav {
  flex: none;
  width: 16px;
  height: 16px;
}

.fav-blue {
  width: 13px;
  height: 13px;
  margin: 0 1.5px;
  color: #92bde6;
}

.fav-gray {
  color: #6f6f6f;
}

.fav-pale {
  color: #9c9c9c;
}

.fav-dark {
  color: #111;
}

.fav-faded {
  opacity: .55;
}

.fav-b {
  display: flex;
  align-items: center;
  justify-content: center;
  border-radius: 3px;
  background: #563d7c;
  color: #fff;
  font-size: 12px;
  font-weight: 700;
}

.fav-b-pale {
  background: #b5a9c9;
}

.tab-label {
  width: 32px;
  overflow: hidden;
  white-space: nowrap;
  -webkit-mask-image: linear-gradient(to right, #000 70%, transparent);
  mask-image: linear-gradient(to right, #000 70%, transparent);
}

.tab-label.short {
  width: 8px;
}

.tab-close {
  position: absolute;
  right: 11px;
  top: 12px;
  width: 9px;
  height: 9px;
}

.tab-plus {
  flex: none;
  width: 14px;
  height: 14px;
  margin-left: 8px;
}

.win-ctrl {
  display: flex;
  margin-left: auto;
  padding-right: 17px;
  gap: 34px;
}

.win-ctrl svg {
  width: 12px;
  height: 12px;
}

/* address bar */
.addressbar {
  display: flex;
  align-items: center;
  height: 38px;
  padding-left: 20px;
  background: #f7f7f7;
}

.nav-ico {
  width: 16px;
  height: 16px;
  margin-right: 28px;
}

.nav-ico + .urlbox {
  margin-left: -8px;
}

.urlbox {
  display: flex;
  align-items: center;
  flex: 0 0 857px;
  height: 31px;
  padding: 0 17px 0 18px;
  border-radius: 16px;
  background: #fff;
}

.info {
  width: 16px;
  height: 16px;
  margin-right: 15px;
}

.url {
  font-family: "Noto Sans", sans-serif;
  font-size: 13px;
  color: #5f7186;
}

.url b {
  font-weight: 400;
  color: #111;
}

.readaloud {
  display: flex;
  margin-left: auto;
  margin-right: 23px;
  font-size: 17px;
  color: #666;
  line-height: 18px;
}

.readaloud svg {
  width: 8px;
  height: 8px;
}

.urlstar {
  width: 17px;
  height: 17px;
}

.toolset {
  display: flex;
  align-items: center;
  flex: 1;
  padding-left: 19px;
}

.tool {
  flex: none;
  width: 18px;
  height: 18px;
  margin-right: 26px;
}

.tool-ext {
  margin-right: 15px;
}

.tool-sep {
  width: 1px;
  height: 18px;
  margin-right: 14px;
  background: #d4d4d4;
}

.avatar {
  display: block;
  width: 24px;
  height: 24px;
  margin-right: 28px;
}

.avatar svg {
  display: block;
  width: 24px;
  height: 24px;
}

.dots {
  display: flex;
  gap: 2px;
  margin-right: 24px;
}

.dots i {
  width: 3px;
  height: 3px;
  border-radius: 50%;
  background: #222;
}

.copilot {
  width: 24px;
  height: 24px;
}

/* favourites */
.bookmarks {
  display: flex;
  align-items: center;
  height: 34px;
  padding: 0 0 2px 14px;
  background: #f7f7f7;
  font-size: 12px;
  color: #222;
  white-space: nowrap;
}

.bm {
  display: flex;
  align-items: center;
  gap: 8px;
  height: 28px;
}

.bm-ico {
  flex: none;
  width: 16px;
  height: 16px;
}

.bm-import {
  width: 126px;
}

.bm-sep {
  width: 1px;
  height: 16px;
  margin: 0 8px 0 11px;
  background: #cfcfcf;
}

.wh-ico {
  display: flex;
  align-items: center;
  justify-content: center;
  width: 16px;
  height: 16px;
  border-radius: 50%;
  background: #8ca868;
  color: #fff;
  font-size: 7px;
  font-weight: 700;
}

.bm-wh {
  width: 145px;
}

.bm-on {
  width: 150px;
  padding-left: 6px;
  border-radius: 4px;
  background: #e4e4e4;
}

.bm-kamer {
  width: 132px;
  margin-left: 10px;
}

.bm-gmail {
  width: 71px;
}

.bm-yt {
  width: 86px;
}

.bm-maps {
  width: 70px;
}

.bm-news {
  width: 92px;
}

.bm-trad {
  width: 83px;
}

/* page in the browser */
.viewport {
  display: flex;
  flex: none;
  height: 620px;
  margin: 0 4px;
  border-radius: 8px 8px 0 8px;
  overflow: hidden;
  background: #fff;
}

.page {
  display: flex;
  flex-direction: column;
  flex: 0 0 1344px;
  font-family: Lato, "Noto Sans", sans-serif;
  color: #858796;
}

.topbar {
  position: relative;
  z-index: 1;
  display: flex;
  flex: none;
  height: 70px;
  padding: 16px 17px 0 32px;
  background: #fff;
  box-shadow: 0 4px 10px rgba(58, 59, 69, .1);
}

.searchbox {
  display: flex;
  height: 38px;
  margin: 0;
}

.searchinput {
  display: flex;
  align-items: center;
  width: 360px;
  padding: 0 0 4px 12px;
  border-radius: 5px 0 0 5px;
  background: #f8f9fc;
  font-size: 14px;
  color: #858796;
}

.searchbtn {
  display: flex;
  align-items: center;
  justify-content: center;
  width: 40px;
  border-radius: 0 5px 5px 0;
  background: #4e73df;
  color: #fff;
}

.searchbtn svg {
  width: 14px;
  height: 14px;
}

.top-right {
  display: flex;
  margin-left: auto;
}

.alert-ico {
  position: relative;
  display: block;
  width: 51px;
  height: 38px;
}

.alert-ico svg {
  position: absolute;
  top: 8px;
  left: 6px;
  width: 16px;
  height: 16px;
  color: #d1d3e2;
}

.alert-ico svg.mail {
  top: 7px;
}

.badge {
  position: absolute;
  top: 4px;
  left: 14px;
  min-width: 17px;
  height: 12px;
  padding: 0 2px;
  border-radius: 3px;
  background: #e74a3b;
  color: #fff;
  font-size: 8px;
  font-weight: 700;
  line-height: 12px;
  text-align: center;
}

.badge.empty {
  top: 5px;
  left: 18px;
  width: 18px;
  border-radius: 4px;
}

.top-divider {
  flex: none;
  width: 1px;
  height: 37px;
  margin: -16px 0 0 33px;
  background: #e3e6f0;
}

.admin-name {
  margin: 13px 20px 0 52px;
  font-size: 13px;
  line-height: 16px;
  letter-spacing: .2px;
}

.logout {
  width: 141px;
  height: 38px;
  padding: 0 0 3px;
  border: none;
  border-radius: 16px;
  background: #ffa500;
  color: #757575;
  font-family: inherit;
  font-size: 16px;
}

.band {
  flex: none;
  height: 24px;
  background: #f0f1f6;
}

.page-row {
  display: flex;
  flex: 1;
  min-height: 0;
}

/* sidebar */
.sidebar {
  flex: 0 0 224px;
  padding: 18px 16px 0;
  background: #008000;
  border-radius: 0 0 0 8px;
}

.side-avatar {
  display: block;
  width: 32px;
  height: 32px;
  margin: 0 auto;
  color: #fff;
}

.side-name {
  margin-top: 44px;
  margin-bottom: 26px;
  font-size: 16px;
  font-weight: 900;
  line-height: 20px;
  letter-spacing: 1.2px;
  text-align: center;
  color: #fff;
}

.side-line {
  height: 1px;
  margin: 0;
  border: none;
  background: rgba(255, 255, 255, .15);
}

.side-dash {
  display: flex;
  align-items: center;
  gap: 8px;
  height: 56px;
  padding-bottom: 2px;
  font-size: 14px;
  font-weight: 700;
  color: #fff;
}

.side-dash svg {
  width: 17px;
  height: 15px;
}

.side-item {
  display: flex;
  align-items: center;
  height: 59px;
  padding-bottom: 2px;
  font-size: 19px;
  font-weight: 700;
  color: rgba(255, 255, 255, .8);
}

.side-item.first {
  margin-top: 16px;
}

.si-ico {
  flex: none;
  margin-right: 3px;
  color: rgba(255, 255, 255, .3);
}

.si-user {
  width: 13px;
  height: 14px;
}

.si-cogs {
  width: 18px;
  height: 14px;
}

.si-cog {
  width: 15px;
  height: 15px;
}

.si-arrow {
  width: 8px;
  height: 16px;
  margin-left: auto;
  margin-right: 4px;
  color: rgba(255, 255, 255, .6);
}

/* main column */
.main {
  display: flex;
  flex-direction: column;
  flex: 0 0 887px;
  background: #f8f9fc;
}

.topbar.inner {
  padding-right: 16px;
}

.card {
  flex: none;
  width: 790px;
  height: 405px;
  margin: 25px 0 0 49px;
  border: 1px solid #e3e6f0;
  border-radius: 5px;
  background: #fff;
  box-shadow: 0 2px 14px rgba(58, 59, 69, .1);
}

.card-header {
  height: 51px;
  padding: 0 19px;
  border-bottom: 1px solid #e3e6f0;
  border-radius: 5px 5px 0 0;
  background: #f8f9fc;
  color: #4e73df;
  font-size: 17px;
  font-weight: 700;
  line-height: 47px;
}

.card-body {
  padding: 20px 19px;
}

.cms-table {
  width: 749px;
  border-collapse: collapse;
  table-layout: fixed;
  font-size: 16px;
}

.cms-table th,
.cms-table td {
  height: 49px;
  padding: 0 12px 3px;
  border: 1px solid #e3e6f0;
  text-align: left;
}

.cms-table th {
  height: 50px;
  border-bottom-width: 2px;
  font-size: 16.5px;
  font-weight: 700;
}

.cms-table th:nth-child(1) {
  width: 98px;
}

.cms-table th:nth-child(2) {
  width: 161px;
}

.cms-table th:nth-child(3) {
  width: 236px;
}

.row-bars {
  display: block;
  width: 15px;
  height: 16px;
}

.td-action {
  background: #36b9cc;
}

.preview {
  display: flex;
  align-items: center;
  letter-spacing: .2px;
}

.preview svg {
  width: 18px;
  height: 16px;
}

.side-foot {
  flex: 1;
  padding-top: 29px;
  font-size: 13px;
  line-height: 16px;
  text-align: center;
}

/* scrollbar */
.scrollbar {
  position: relative;
  flex: 1;
}

.sb-up,
.sb-down {
  position: absolute;
  left: 3px;
  width: 0;
  height: 0;
  border-left: 4px solid transparent;
  border-right: 4px solid transparent;
}

.sb-up {
  top: 9px;
  border-bottom: 5px solid #8a8a8a;
}

.sb-down {
  bottom: 8px;
  border-top: 5px solid #8a8a8a;
}

.sb-thumb {
  position: absolute;
  top: 23px;
  left: 2px;
  width: 10px;
  height: 449px;
  border-radius: 5px;
  background: #8e8e8e;
}

/* windows taskbar */
.taskbar {
  display: flex;
  align-items: stretch;
  height: 40px;
  margin-top: auto;
  background: #1c1c18;
  color: #eee;
}

.start {
  display: flex;
  align-items: center;
  justify-content: center;
  flex: 0 0 48px;
  color: #fff;
}

.start svg {
  width: 16px;
  height: 16px;
}

.task-search {
  position: relative;
  display: flex;
  align-items: center;
  flex: 0 0 288px;
  padding-left: 12px;
  background: #f0f0f0;
  font-family: "Noto Sans", sans-serif;
  font-size: 14px;
  color: #333;
  overflow: hidden;
}

.task-search > svg:first-child {
  width: 16px;
  height: 16px;
  margin-right: 12px;
}

.castle {
  position: absolute;
  right: 0;
  bottom: 0;
  width: 76px;
  height: 40px;
}

.task-ico {
  position: relative;
  display: flex;
  align-items: center;
  justify-content: center;
  flex: 0 0 49.2px;
}

.task-ico svg {
  width: 24px;
  height: 24px;
}

.task-ico svg.taskview {
  width: 16px;
  height: 16px;
}

.task-ico.open::after {
  content: "";
  position: absolute;
  left: 4px;
  right: 4px;
  bottom: 0;
  height: 2px;
  background: #76b9ed;
}

.task-ico.on-orange {
  background: #a85f28;
}

.task-ico.on-orange::after {
  left: 0;
  right: 0;
  background: #f7790c;
}

.task-ico.on-gray {
  background: #4c4c4c;
}

.ps-letters {
  fill: #31a8ff;
  font-family: "Noto Sans", sans-serif;
  font-size: 13px;
}

.tray {
  display: flex;
  align-items: center;
  flex: 1;
  padding-left: 58px;
  font-size: 13px;
}

.sun {
  flex: none;
  width: 20px;
  height: 20px;
  border-radius: 50%;
  background: linear-gradient(135deg, #f6b93b, #ee6c10);
}

.temp {
  width: 53px;
  margin-left: 10px;
}

.tr-ico {
  flex: none;
  width: 15px;
  height: 15px;
  margin-right: 9px;
}

.lang {
  margin-left: 1px;
  font-size: 12px;
}

.clock {
  display: flex;
  flex-direction: column;
  align-items: center;
  width: 72px;
  margin-left: 6px;
  font-size: 11.5px;
  line-height: 19px;
}

.notif {
  position: relative;
  width: 20px;
  height: 24px;
  margin-left: 10px;
}

.notif svg {
  display: block;
  width: 17px;
  height: 17px;
}

.notif-num {
  position: absolute;
  left: 5px;
  top: 9px;
  width: 16px;
  height: 16px;
  border: 1px solid #999;
  border-radius: 50%;
  background: #333;
  font-size: 10px;
  font-weight: 700;
  line-height: 14px;
  text-align: center;
}
```
